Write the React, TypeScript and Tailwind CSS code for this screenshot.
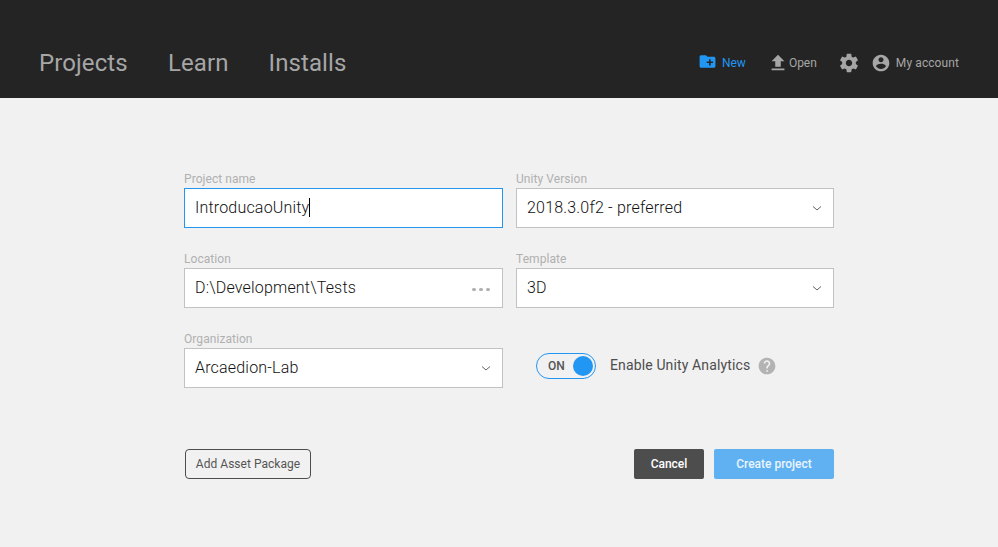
import React from "react";

function Icon({ d, className }: { d: string; className: string }) {
  return (
    <svg viewBox="0 0 24 24" fill="currentColor" aria-hidden="true" className={`shrink-0 ${className}`}>
      <path d={d} />
    </svg>
  );
}

const icons = {
  newFolder:
    "M20 6h-8l-2-2H4c-1.11 0-1.99.89-1.99 2L2 18c0 1.11.89 2 2 2h16c1.11 0 2-.89 2-2V8c0-1.11-.89-2-2-2zm-1 8h-3v3h-2v-3h-3v-2h3V9h2v3h3v2z",
  upload: "M9 16h6v-6h4l-7-7-7 7h4zm-4 2h14v2H5z",
  settings:
    "M19.43 12.98c.04-.32.07-.64.07-.98s-.03-.66-.07-.98l2.11-1.65c.19-.15.24-.42.12-.64l-2-3.46c-.12-.22-.39-.3-.61-.22l-2.49 1c-.52-.4-1.08-.73-1.69-.98l-.38-2.65C14.46 2.18 14.25 2 14 2h-4c-.25 0-.46.18-.49.42l-.38 2.65c-.61.25-1.17.59-1.69.98l-2.49-1c-.23-.09-.49 0-.61.22l-2 3.46c-.13.22-.07.49.12.64l2.11 1.65c-.04.32-.07.65-.07.98s.03.66.07.98l-2.11 1.65c-.19.15-.24.42-.12.64l2 3.46c.12.22.39.3.61.22l2.49-1c.52.4 1.08.73 1.69.98l.38 2.65c.03.24.24.42.49.42h4c.25 0 .46-.18.49-.42l.38-2.65c.61-.25 1.17-.59 1.69-.98l2.49 1c.23.09.49 0 .61-.22l2-3.46c.12-.22.07-.49-.12-.64l-2.11-1.65zM12 15.5c-1.93 0-3.5-1.57-3.5-3.5s1.57-3.5 3.5-3.5 3.5 1.57 3.5 3.5-1.57 3.5-3.5 3.5z",
  account:
    "M12 2C6.48 2 2 6.48 2 12s4.48 10 10 10 10-4.480 10-10S17.520 2 12 2zm0 3c1.660 0 3 1.340 3 3s-1.340 3-3 3-3-1.340-3-3 1.340-3 3-3zm0 14.200c-2.500 0-4.710-1.280-6-3.220.030-1.990 4-3.080 6-3.080 1.990 0 5.970 1.090 6 3.080-1.290 1.940-3.500 3.220-6 3.220z",
  help:
    "M12 2C6.48 2 2 6.48 2 12s4.48 10 10 10 10-4.48 10-10S17.52 2 12 2zm1 17h-2v-2h2v2zm2.07-7.750l-.9.920C13.450 12.900 13 13.500 13 15h-2v-.5c0-1.100.450-2.100 1.170-2.830l1.240-1.260c.370-.360.590-.860.590-1.410 0-1.100-.9-2-2-2s-2 .9-2 2H8c0-2.210 1.790-4 4-4s4 1.790 4 4c0 .880-.360 1.680-.930 2.250z",
};

function Chevron() {
  return (
    <svg viewBox="0 0 10 6" fill="none" stroke="#6b6459" className="-mr-px h-[6px] w-[10px] shrink-0">
      <path d="M1 1.500l4 3.500L9 1.500" />
    </svg>
  );
}

function Field({
  label,
  value,
  focused = false,
  children,
}: {
  label: string;
  value: string;
  focused?: boolean;
  children?: React.ReactNode;
}) {
  return (
    <div className="h-[57px]">
      <div className="h-[17px] text-[12px] leading-[16px] tracking-[0.06px] text-[#b0b0b0]">{label}</div>
      <div
        className={`flex h-10 items-center border bg-white pr-3 pl-[10px] ${
          focused ? "border-[#2196f3]" : "border-[#c2c2c2]"
        }`}
      >
        <span className="text-[16px] leading-5 font-light tracking-[0.19px] text-[#111]">{value}</span>
        {focused && <span className="-mt-px h-[19px] w-px bg-black" />}
        <span className="ml-auto flex items-center">{children}</span>
      </div>
    </div>
  );
}

export default function App() {
  return (
    <div className="h-[547px] w-[998px] overflow-hidden bg-[#f1f1f1] font-['Roboto',sans-serif]">
      <header className="flex h-[98px] items-center bg-[#242424] pt-[27px] pl-[39px] text-[#a6a6a6]">
        <nav className="flex gap-[41px] text-[24px] leading-7">
          <span className="w-[88px] tracking-[0.1px]">Projects</span>
          <span className="w-[60px] tracking-[0.1px]">Learn</span>
          <span className="-ml-[0.5px] tracking-[0.1px]">Installs</span>
        </nav>
        <div className="mr-[39px] ml-auto flex items-center text-[12px] leading-4">
          <span className="flex items-center text-[#2196f3]">
            <Icon d={icons.newFolder} className="-mt-[2px] mr-[5px] size-[19px]" />
            New
          </span>
          <span className="ml-[21px] flex items-center">
            <Icon d={icons.upload} className="size-[22px]" />
            Open
          </span>
          <Icon d={icons.settings} className="ml-[21px] size-[22px]" />
          <Icon d={icons.account} className="ml-[11px] size-[20px]" />
          <span className="ml-[5px] tracking-[0.09px]">My account</span>
        </div>
      </header>
      <main className="mr-[164px] ml-[184px] pt-[73px]">
        <div className="grid grid-cols-[319px_318px] gap-x-[13px] gap-y-[23px]">
          <Field label="Project name" value="IntroducaoUnity" focused />
          <Field label="Unity Version" value="2018.3.0f2 - preferred">
            <Chevron />
          </Field>
          <Field label="Location" value="D:\Development\Tests">
            <span className="mt-[3px] flex gap-[3px]">
              <i className="h-[3px] w-1 rounded-full bg-[#b0b0b0]" />
              <i className="h-[3px] w-1 rounded-full bg-[#b0b0b0]" />
              <i className="h-[3px] w-1 rounded-full bg-[#b0b0b0]" />
            </span>
          </Field>
          <Field label="Template" value="3D">
            <Chevron />
          </Field>
          <Field label="Organization" value="Arcaedion-Lab">
            <Chevron />
          </Field>
          <div className="mt-[22px] flex h-[26px] items-center self-start pl-5">
            <div className="flex h-[26px] w-[60px] items-center justify-between rounded-full border border-[#2196f3] pr-[2px] pl-[11px]">
              <span className="text-[12px] font-medium text-[#555]">ON</span>
              <span className="size-5 rounded-full bg-[#2196f3]" />
            </div>
            <span className="-mt-[2px] ml-[14px] w-[140px] text-[14px] leading-5 tracking-[0.13px] whitespace-nowrap text-[#4d4d4d]">
              Enable Unity Analytics
            </span>
            <Icon d={icons.help} className="ml-[7px] size-5 text-[#b3b3b3]" />
          </div>
        </div>
        <div className="mt-[61px] flex text-[12px] leading-4">
          <button className="ml-px h-[30px] w-[126px] rounded-[4px] border border-[#4d4d4d] tracking-[0.03px] text-[#555]">
            Add Asset Package
          </button>
          <button className="ml-auto h-[30px] w-[70px] rounded-[2px] bg-[#4d4d4d] font-medium text-white">
            Cancel
          </button>
          <button className="ml-[10px] h-[30px] w-[120px] rounded-[2px] bg-[#60b1f2] font-medium text-[#eaf5fe]">
            Create project
          </button>
        </div>
      </main>
    </div>
  );
}
